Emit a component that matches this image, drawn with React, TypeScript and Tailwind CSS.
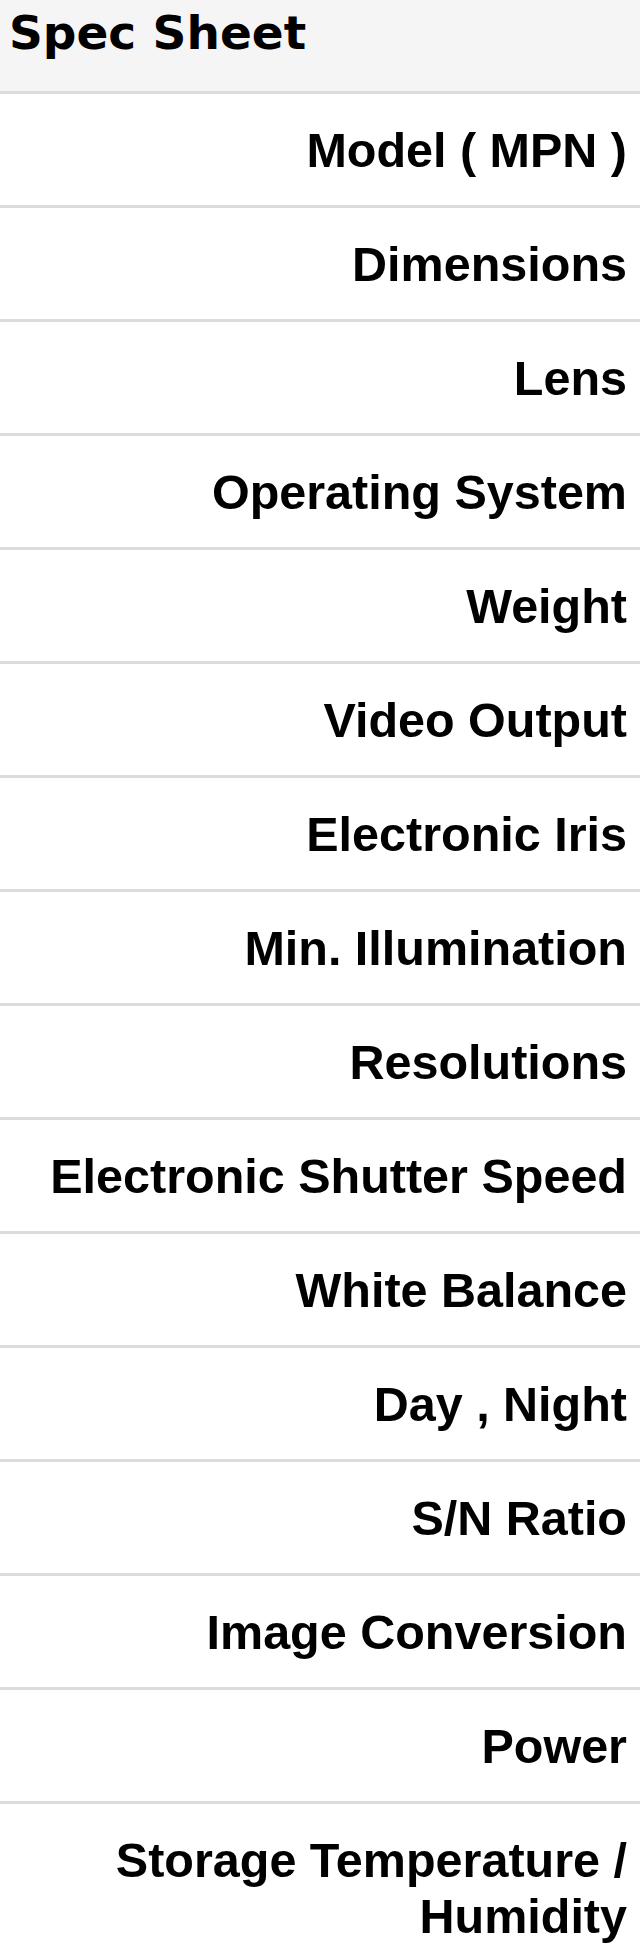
import React from "react";

const specs: string[] = [
  "Model ( MPN )",
  "Dimensions",
  "Lens",
  "Operating System",
  "Weight",
  "Video Output",
  "Electronic Iris",
  "Min. Illumination",
  "Resolutions",
  "Electronic Shutter Speed",
  "White Balance",
  "Day , Night",
  "S/N Ratio",
  "Image Conversion",
  "Power",
  "Storage Temperature / Humidity",
];

const SpecRow = ({ label }: { label: string }) => (
  <div className="border-b-[3px] border-[#dcdcdc] bg-white py-[27.5px] pl-4 pr-[13px] text-right font-['Liberation_Sans',Arial,sans-serif] text-[48.5px] font-bold leading-[56px] text-black">
    {label}
  </div>
);

export default function App() {
  return (
    <div className="w-[640px] bg-white">
      <div className="h-[94px] border-b-[3px] border-[#dcdcdc] bg-[#f5f5f5] pl-[9px] pt-[5px] font-['DejaVu_Sans',Verdana,sans-serif] text-[47px] font-bold leading-[55px] text-black">
        Spec Sheet
      </div>
      {specs.map((s) => (
        <SpecRow key={s} label={s} />
      ))}
    </div>
  );
}
